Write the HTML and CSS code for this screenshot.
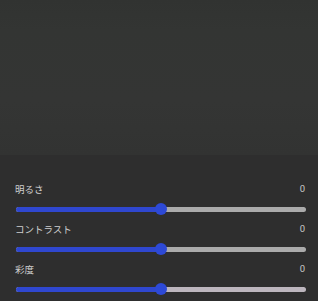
FILE: index.html
```html
<!DOCTYPE html>
<html lang="ja">
<head>
<meta charset="utf-8">
<link rel="stylesheet" href="styles.css">
</head>
<body>
<div class="preview"></div>
<div class="panel">
  <div class="row">
    <div class="head"><span class="label">明るさ</span><span class="value">0</span></div>
    <div class="slider"><div class="track"><div class="fill" style="width:50%"></div><div class="thumb" style="left:50%"></div></div></div>
  </div>
  <div class="row">
    <div class="head"><span class="label">コントラスト</span><span class="value">0</span></div>
    <div class="slider"><div class="track"><div class="fill" style="width:50%"></div><div class="thumb" style="left:50%"></div></div></div>
  </div>
  <div class="row">
    <div class="head"><span class="label">彩度</span><span class="value">0</span></div>
    <div class="slider"><div class="track alt"><div class="fill" style="width:50%"></div><div class="thumb" style="left:50%"></div></div></div>
  </div>
</div>
</body>
</html>
```
FILE: styles.css
```css
html, body {
  margin: 0;
  padding: 0;
  width: 318px;
  height: 301px;
  overflow: hidden;
  background: #2e2e2e;
  font-family: "Noto Sans CJK JP", "Noto Sans", sans-serif;
}
.preview {
  height: 155px;
  background: linear-gradient(#313331 0px, #333533 30px, #343534 100px, #323332 155px);
}
.panel {
  padding: 27px 12px 0 15px;
  display: flex;
  flex-direction: column;
  gap: 6px;
}
.row {
  display: flex;
  flex-direction: column;
  gap: 6px;
}
.head {
  display: flex;
  justify-content: space-between;
  align-items: center;
  height: 14px;
  color: #cfcfcf;
}
.label {
  font-size: 9.5px;
  line-height: 14px;
}
.value {
  font-family: "Roboto", "Noto Sans", sans-serif;
  font-size: 9.5px;
  line-height: 14px;
  padding-right: 1px;
  color: #c8c8c8;
}
.slider {
  height: 14px;
  display: flex;
  align-items: center;
  padding-left: 1px;
}
.track {
  position: relative;
  flex: 1;
  height: 5px;
  border-radius: 3px;
  background: #ababab;
}
.track.alt {
  background: #bdb6be;
}
.fill {
  height: 100%;
  border-radius: 3px 0 0 3px;
  background: #2f47cf;
}
.thumb {
  position: absolute;
  top: 50%;
  width: 12px;
  height: 12px;
  margin: -6px 0 0 -6px;
  border-radius: 50%;
  background: #2d49d6;
}
```
